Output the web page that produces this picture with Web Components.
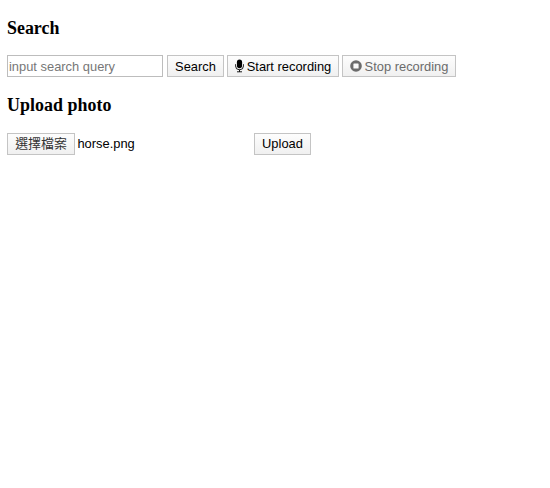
<!DOCTYPE html>
<html lang="zh-Hant"><head><meta charset="utf-8"><title>Search and upload</title>
<style>
body{margin:0;background:#fff;color:#000}
</style></head><body>
<photo-page></photo-page>
<script>
const define = (name, html) => customElements.define(name, class extends HTMLElement {
  constructor() {
    super();
    const t = document.createElement('template');
    t.innerHTML = html;
    this.attachShadow({mode: 'open'}).append(t.content.cloneNode(true));
  }
});

define('push-button', `<style>
:host{display:block;flex:none;font:12.9px/19px "Liberation Sans","Noto Sans CJK TC",sans-serif;color:#000}
button{box-sizing:border-box;width:100%;height:22px;margin:0;padding:0;display:flex;align-items:center;justify-content:center;gap:3px;
font:inherit;color:inherit;white-space:nowrap;border:1px solid #c4c4c4;border-radius:0;background:linear-gradient(#fdfdfd,#f0f0f0)}
:host([muted]){color:#6b6b6b}
</style><button><slot name="icon"></slot><span><slot></slot></span></button>`);

define('mic-icon', `<style>:host{display:block;width:9px;height:14px;margin-top:-1px}svg{display:block}</style>
<svg width="9" height="14" viewBox="0 0 9 14" fill="none" stroke="currentColor">
<rect x="1.9" y=".6" width="5.2" height="8.6" rx="2.6" fill="currentColor" stroke="none"/>
<path d="M.5 5.3v1.5a4 4 0 0 0 8 0V5.3M4.5 10.6v2.2M2 12.8h5" stroke-width=".9"/></svg>`);

define('stop-icon', `<style>:host{display:block;width:12px;height:12px;margin-top:-1px}svg{display:block}</style>
<svg width="12" height="12" viewBox="0 0 12 12"><circle cx="6" cy="6" r="5.8" fill="currentColor"/><rect x="3.4" y="3.4" width="5.2" height="5.2" rx=".6" fill="#f9f9f9"/></svg>`);

define('search-field', `<style>:host{display:block;flex:none;width:156px}
input{display:block;box-sizing:border-box;width:100%;height:22px;margin:0;padding:0 1px;border:1px solid #bdbdbd;border-radius:0;outline:0;background:#fff;font:12.9px "Liberation Sans",sans-serif}
input::placeholder{color:#777;opacity:1}</style><input placeholder="input search query">`);

define('file-field', `<style>:host{display:flex;flex:none;width:243px;gap:2.4px;font:12.9px/22px "Liberation Sans",sans-serif}
push-button{width:68px;color:#333}</style><push-button>選擇檔案</push-button><span><slot></slot></span>`);

define('form-section', `<style>:host{display:block;height:77.5px}
h3{margin:0 0 16.5px;font:bold 17.9px/21px "Liberation Serif",serif}
div{display:flex;align-items:flex-start}</style><h3><slot name="title"></slot></h3><div><slot></slot></div>`);

define('photo-page', `<style>:host{display:block;padding:17.5px 7px 0}
.row{display:flex;gap:4px}.search{width:57px;margin-right:-1px}.start{width:112px;margin-right:-1px}.stop{width:114px}.upload{width:57px}
.wide{letter-spacing:.06px}</style>
<form-section><span slot="title">Search</span><div class="row">
<search-field></search-field><push-button class="search">Search</push-button>
<push-button class="start"><mic-icon slot="icon"></mic-icon>Start recording</push-button>
<push-button class="stop" muted><stop-icon slot="icon"></stop-icon>Stop recording</push-button></div></form-section>
<form-section><span slot="title" class="wide">Upload photo</span><div class="row">
<file-field>horse.png</file-field><push-button class="upload">Upload</push-button></div></form-section>`);
</script></body></html>
